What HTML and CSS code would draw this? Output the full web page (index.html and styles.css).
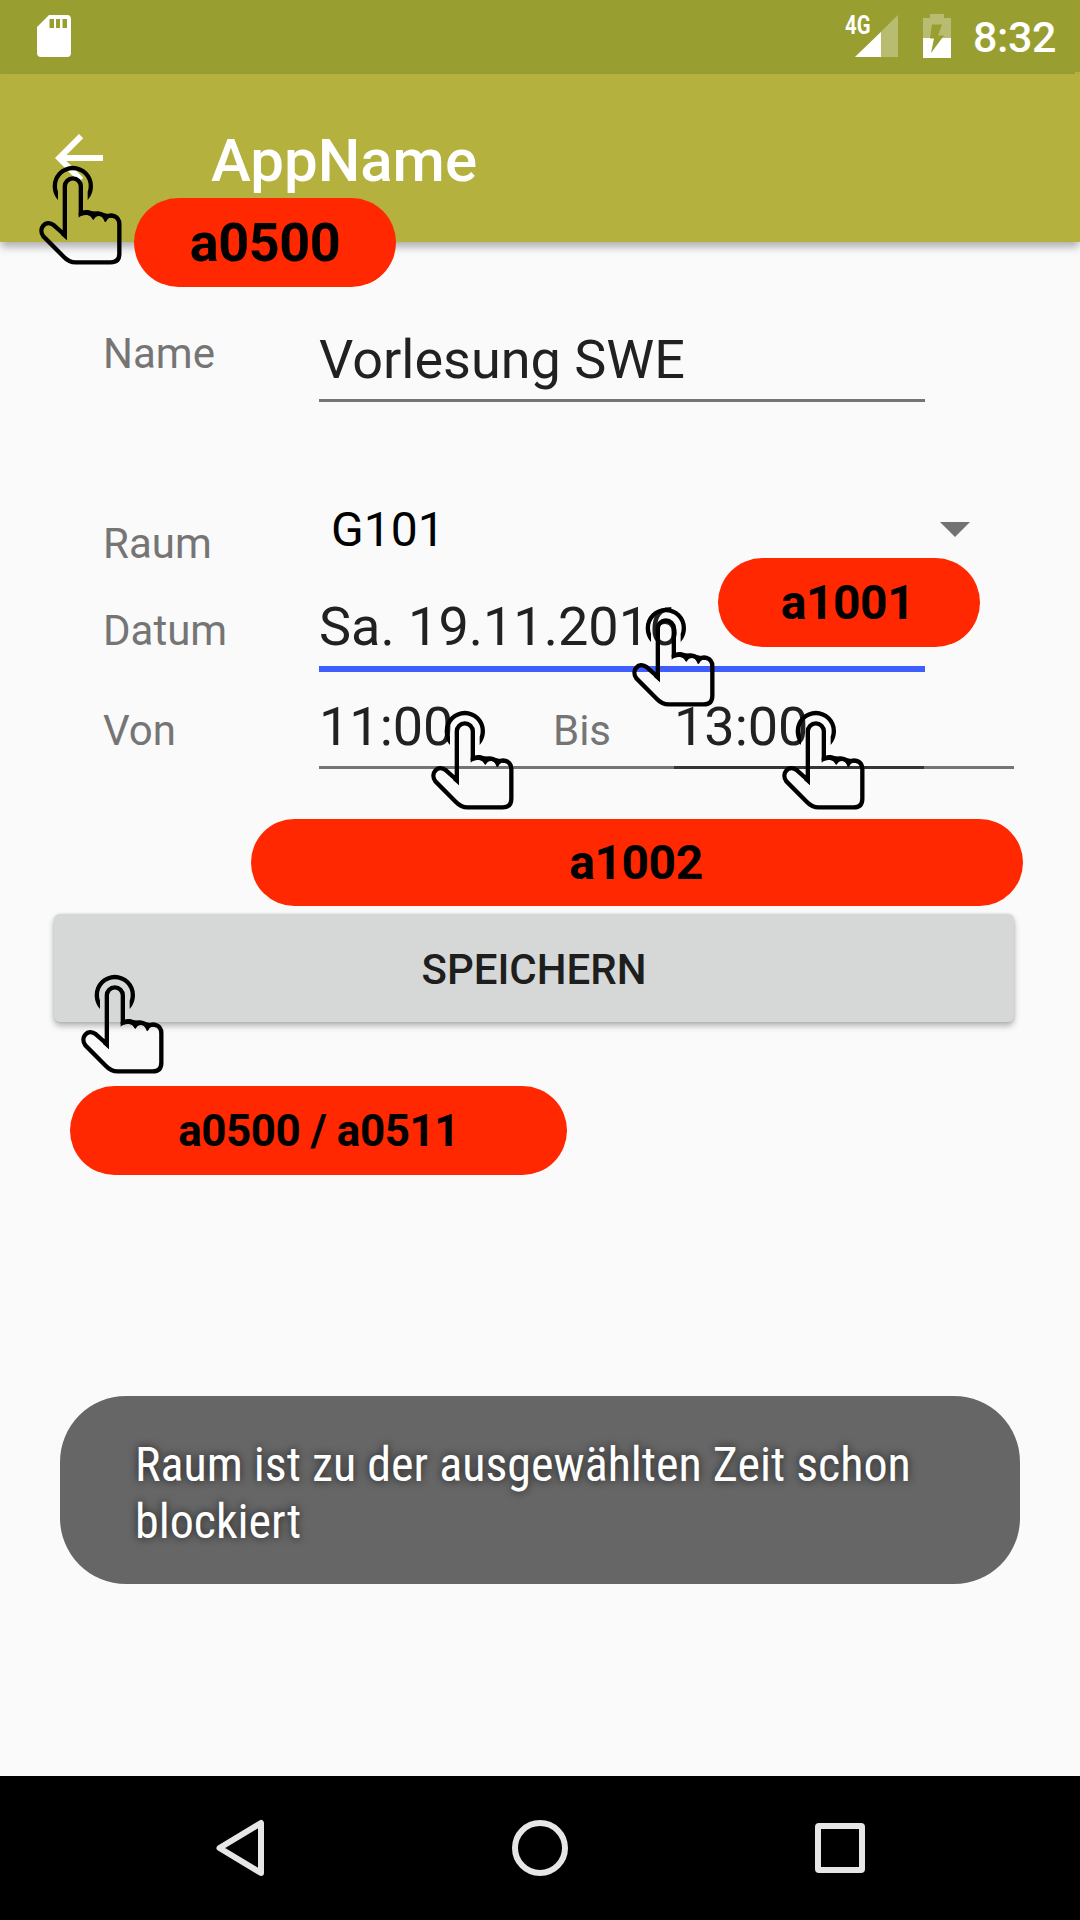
FILE: index.html
```html
<!DOCTYPE html>
<html lang="de">
<head>
<meta charset="utf-8">
<title>AppName</title>
<link rel="stylesheet" href="styles.css">
</head>
<body>
<svg class="defs" width="0" height="0" aria-hidden="true">
  <symbol id="tap" viewBox="18 12 249 300">
    <path d="M75 117C67 108 59 94 59 75A60.500 60.500 0 0 1 180 75C180 94 172 108 164 117V92C166 87 167 81 167 75A47.500 47.500 0 0 0 72 75C72 81 73 87 75 92Z"/>
    <path class="hand-line" d="M143.500 163V76A24 24 0 0 0 95.500 76V222L63 193C38 174 14 202 31 226L92 287Q108 304 128 304H233Q259 304 259 278V190C259 160 226 158 217 171C210 156 188 153 180 164C171 151 155 151 143.500 158"/>
    <path d="M89 215H102V238L84 222ZM137 155V170C145 161 164 159 174 167L181 177L188 168C198 162 208 165 213 173L218 184L224 174C230 169 236 170 243 172L230 160L200 154L160 148Z"/>
  </symbol>
</svg>
<div class="phone">
  <header class="status">
    <svg class="sd" viewBox="0 0 34 42"><path fill="#fff" fill-rule="evenodd" d="M12 0H30q4 0 4 4V38q0 4-4 4H4q-4 0-4-4V12ZM12.500 4v9h4.500V4ZM19 4v9h4V4ZM25.500 4v9H30V4Z"/></svg>
    <span class="net">4G</span>
    <svg class="signal" viewBox="0 0 43 42"><path fill="#b8bc70" d="M43 0V42H0Z"/><path fill="#fff" d="M26 17V42H0Z"/></svg>
    <svg class="battery" viewBox="0 0 28 44"><path fill="#b8bc70" d="M7 0H21V4H28V24H0V4H7Z"/><path fill="#fff" d="M0 24H28V44H0Z"/><path fill="#989e30" d="M9 10.500H19L15 21.500H21L8 39L11 24.500H7Z"/></svg>
    <span class="clock">8:32</span>
  </header>
  <div class="toolbar">
    <svg class="back" viewBox="4 4 16 16"><path fill="#fff" d="M20 11H7.830l5.590-5.590L12 4l-8 8 8 8 1.410-1.410L7.830 13H20z"/></svg>
    <h1 class="title">AppName</h1>
  </div>
  <main class="form">
    <div class="row row-name"><span class="label">Name</span><div class="field">Vorlesung SWE</div></div>
    <div class="row row-room"><span class="label">Raum</span><div class="select"><span>G101</span><svg class="caret" viewBox="0 0 30 15"><path fill="#737373" d="M0 0H30L15 15Z"/></svg></div></div>
    <div class="row row-date"><span class="label">Datum</span><div class="field focused">Sa. 19.11.2016</div></div>
    <div class="row row-time"><span class="label">Von</span><div class="field from">11:00</div><span class="label until-label">Bis</span><div class="field until"><span>13:00</span><i class="overlap"></i></div></div>
    <button class="save">SPEICHERN</button>
  </main>
  <nav class="nav">
    <svg viewBox="0 0 60 60"><path d="M9.500 30L51 5V55Z"/></svg>
    <svg viewBox="0 0 60 60"><circle cx="30" cy="30" r="25"/></svg>
    <svg viewBox="0 0 60 60"><rect x="8" y="8" width="44" height="44" rx="1"/></svg>
  </nav>
  <div class="toast"><p>Raum ist zu der ausgewählten Zeit schon<br>blockiert</p></div>
  <div class="tag tag-back">a0500</div>
  <div class="tag tag-date">a1001</div>
  <div class="tag tag-time">a1002</div>
  <div class="tag tag-save">a0500 / a0511</div>
  <svg class="tap tap-back"><use href="#tap"/></svg>
  <svg class="tap tap-date"><use href="#tap"/></svg>
  <svg class="tap tap-from"><use href="#tap"/></svg>
  <svg class="tap tap-until"><use href="#tap"/></svg>
  <svg class="tap tap-save"><use href="#tap"/></svg>
</div>
</body>
</html>
```
FILE: styles.css
```css
* { box-sizing: border-box; }
body { margin: 0; font-family: Roboto, "Liberation Sans", sans-serif; }
svg { display: block; flex: none; }
.defs { position: absolute; }
.phone { position: relative; display: flex; flex-direction: column; width: 1080px; height: 1920px; background: #fafafa; overflow: hidden; }
.status { display: flex; align-items: flex-start; height: 74px; padding: 15px 24px 0 37px; background: #989e30; color: #fff; }
.sd { width: 34px; height: 42px; }
.net { width: 26px; margin: 3px -16px 0 auto; font-size: 26px; line-height: 14px; font-weight: 700; transform: scaleX(.78); transform-origin: left; }
.signal { width: 43px; height: 42px; margin-right: 25px; }
.battery { width: 28px; height: 44px; margin: -1px 22px 0 0; }
.clock { width: 83px; font-size: 43px; font-weight: 500; line-height: 44px; letter-spacing: -.4px; white-space: nowrap; }
.toolbar { position: relative; display: flex; align-items: center; height: 168px; padding-left: 55px; background: #b4b13f; box-shadow: 0 6px 8px -1px rgba(0,0,0,.3); }
.toolbar::after { content: ""; position: absolute; right: 0; top: -2px; width: 5px; height: 3px; background: #b4b13f; }
.back { width: 48px; height: 48px; }
.title { margin: 5px 0 0 108px; color: #fff; font-size: 60px; font-weight: 500; line-height: 70px; }
.form { flex: 1; padding: 87px 66px 0 54px; }
.row { display: flex; align-items: flex-start; padding-left: 49px; }
.label { flex: none; width: 216px; color: #757575; font-size: 42px; line-height: 50px; }
.field { width: 606px; height: 73px; border-bottom: 3px solid #737573; color: #212121; font-size: 54px; line-height: 62px; white-space: nowrap; }
.row-room { margin-top: 100px; }
.row-room .label { padding-top: 17px; height: 56px; }
.select { display: flex; justify-content: space-between; width: 651px; padding-left: 12px; font-size: 48px; line-height: 56px; color: #000; }
.caret { width: 30px; height: 15px; margin-top: 20px; }
.row-date { margin-top: 38px; }
.row-date .label, .row-time .label { margin-top: 10px; }
.focused { height: 76px; border-bottom: 6px solid #405dfe; }
.row-time { margin-top: 24px; }
.from { width: 356px; }
.until-label.label { width: 121px; margin-left: -121px; }
.until { position: relative; width: 341px; }
.overlap { position: absolute; left: 0; bottom: -3px; width: 250px; height: 3px; background: #353538; }
.save { display: block; width: 960px; height: 108px; margin-top: 145px; padding: 4px 0 0; border: 0; border-radius: 6px; background: #d6d8d7; box-shadow: 0 4px 6px rgba(0,0,0,.28), 0 0 3px rgba(0,0,0,.12); color: #1d1e1d; font: 500 42px/50px Roboto, sans-serif; }
.nav { display: flex; justify-content: space-between; align-items: center; height: 144px; padding: 0 210px; background: #000; }
.nav svg { width: 60px; height: 60px; fill: none; stroke: #e6e6e6; stroke-width: 6; stroke-linejoin: round; }
.toast { position: absolute; left: 60px; top: 1396px; width: 960px; height: 188px; padding: 40px 75px; border-radius: 66px; background: #666; color: #fff; }
.toast p { margin: 0; font-family: "Roboto Condensed", Roboto, sans-serif; font-stretch: condensed; font-size: 48px; line-height: 57px; white-space: nowrap; text-shadow: 0 0 8px rgba(0,0,0,.7); }
.tag { position: absolute; display: flex; align-items: center; justify-content: center; height: 89px; border-radius: 45px; background: #ff2800; color: #000; font-size: 48px; font-weight: 700; letter-spacing: -.5px; }
.tag-back { left: 134px; top: 198px; width: 262px; font-size: 54px; }
.tag-date { left: 718px; top: 558px; width: 262px; padding-right: 3px; }
.tag-time { left: 251px; top: 819px; width: 772px; height: 87px; padding-right: 2px; }
.tag-save { left: 70px; top: 1086px; width: 497px; font-size: 44px; }
.tap { position: absolute; width: 83px; height: 100px; }
.hand-line { fill: none; stroke: #000; stroke-width: 13; stroke-linejoin: miter; }
.tap-back { left: 39px; top: 165px; }
.tap-date { left: 632px; top: 607px; }
.tap-from { left: 431px; top: 710px; }
.tap-until { left: 782px; top: 710px; }
.tap-save { left: 81px; top: 974px; }
```
